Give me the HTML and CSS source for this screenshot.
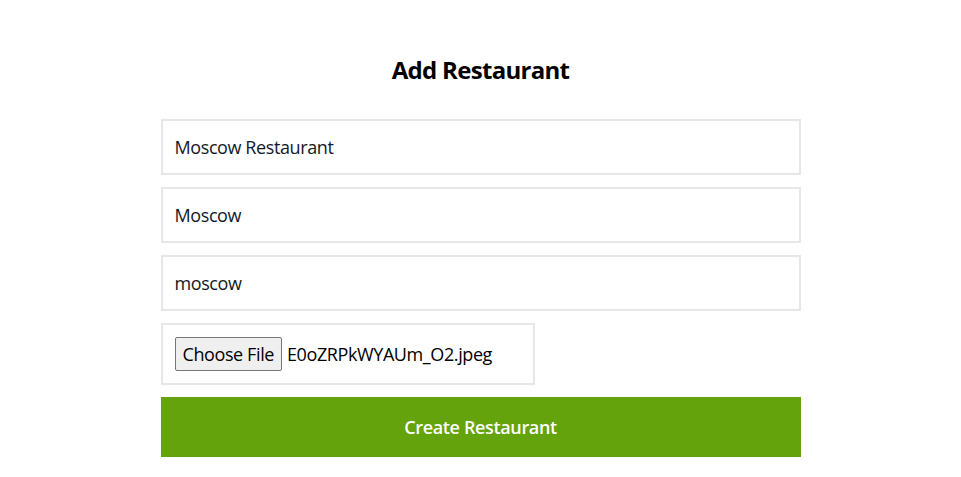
FILE: index.html
```html
<!DOCTYPE html>
<html lang="en">
<head>
<meta charset="utf-8">
<title>Add Restaurant</title>
<link rel="stylesheet" href="styles.css">
</head>
<body>
<main class="page">
  <h1 class="title">Add Restaurant</h1>
  <form class="form">
    <input class="field" type="text" value="Moscow Restaurant">
    <input class="field" type="text" value="Moscow">
    <input class="field" type="text" value="moscow">
    <div class="file">
      <span class="file-btn">Choose File</span>
      <span class="file-name">E0oZRPkWYAUm_O2.jpeg</span>
    </div>
    <button class="submit" type="button">Create Restaurant</button>
  </form>
</main>
</body>
</html>
```

FILE: styles.css
```css
* { box-sizing: border-box; }
html, body { margin: 0; padding: 0; background: #fff; }
body {
  font-family: "Open Sans", "Noto Sans", "DejaVu Sans", sans-serif;
  color: #111827;
}
.page {
  width: 640px;
  margin: 0 auto;
  padding-top: 54px;
  display: flex;
  flex-direction: column;
  align-items: stretch;
}
.title {
  margin: 0 0 33px;
  text-align: center;
  font-size: 24px;
  line-height: 32px;
  font-weight: 700;
  letter-spacing: -0.7px;
  color: #000;
}
.form {
  display: flex;
  flex-direction: column;
  align-items: flex-start;
  gap: 12px;
}
.field {
  width: 100%;
  height: 56px;
  border: 2px solid #e5e7eb;
  padding: 12px;
  font-family: inherit;
  font-size: 18px;
  line-height: 28px;
  letter-spacing: -0.4px;
  color: #111827;
  background: #fff;
  outline: none;
  margin: 0;
}
.file {
  display: flex;
  align-items: center;
  border: 2px solid #e5e7eb;
  padding: 12px;
  height: 62px;
  width: 374px;
  font-size: 18px;
  letter-spacing: -0.4px;
}
.file-btn {
  display: inline-flex;
  align-items: center;
  height: 34px;
  padding: 0 7px;
  background: #efefef;
  border: 1px solid #767676;
  border-radius: 2px;
  color: #000;
  margin-right: 5px;
  white-space: nowrap;
}
.file-name {
  color: #000;
  white-space: nowrap;
}
.submit {
  width: 100%;
  height: 60px;
  border: 0;
  margin: 0;
  background: #65a30d;
  color: #fff;
  font-family: inherit;
  font-size: 18px;
  font-weight: 600;
  line-height: 28px;
  letter-spacing: -0.35px;
}
```
